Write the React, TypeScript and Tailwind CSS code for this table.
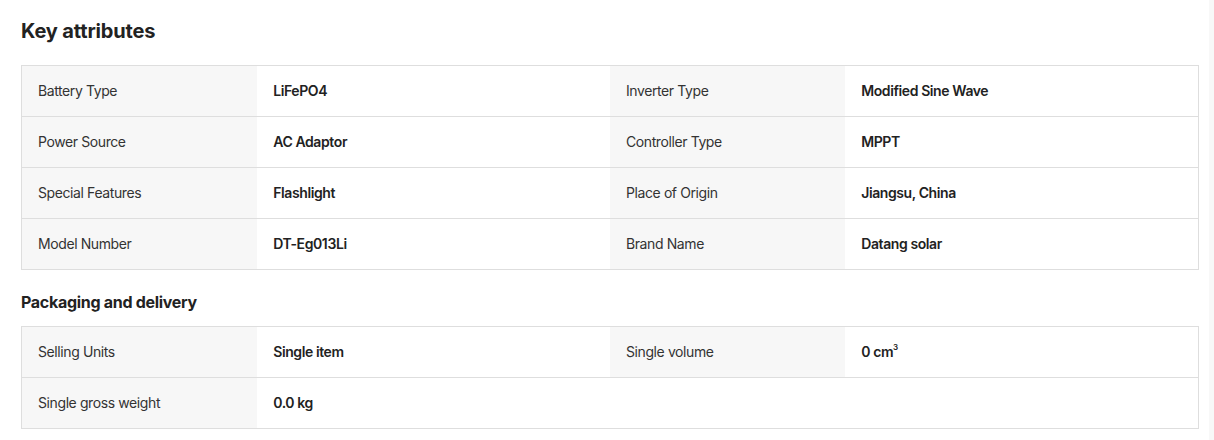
const keyAttributes: [string, string][] = [
  ['Battery Type', 'LiFePO4'],
  ['Inverter Type', 'Modified Sine Wave'],
  ['Power Source', 'AC Adaptor'],
  ['Controller Type', 'MPPT'],
  ['Special Features', 'Flashlight'],
  ['Place of Origin', 'Jiangsu, China'],
  ['Model Number', 'DT-Eg013Li'],
  ['Brand Name', 'Datang solar'],
];

const packaging: [string, React.ReactNode][] = [
  ['Selling Units', 'Single item'],
  ['Single volume', <>0 cm<sup className="text-[8px] -top-[5px]">3</sup></>],
  ['Single gross weight', '0.0 kg'],
];

function AttrTable({ items }: { items: [string, React.ReactNode][] }) {
  const rows: [string, React.ReactNode][][] = [];
  for (let i = 0; i < items.length; i += 2) rows.push(items.slice(i, i + 2));

  return (
    <div className="w-[1178px] border border-[#dedede]">
      {rows.map((row, ri) => (
        <div
          key={ri}
          className={`grid grid-cols-[20%_30%_20%_30%] box-content h-[50px] ${ri > 0 ? 'border-t border-[#dedede]' : ''}`}
        >
          {row.map(([label, value]) => (
            <div key={label} className="contents">
              <div className="bg-[#f7f7f7] flex items-center pl-4 text-sm tracking-[-0.4px] text-[#333]">{label}</div>
              <div className="flex items-center pl-4 text-sm tracking-[-0.4px] font-semibold text-[#222]">{value}</div>
            </div>
          ))}
        </div>
      ))}
    </div>
  );
}

export default function App() {
  return (
    <div className="flex min-h-[440px] bg-white font-['Inter',_sans-serif]">
      <div className="flex-1 pl-[21px] pt-[17px]">
        <h2 className="text-xl leading-7 font-bold tracking-[-0.15px] text-[#222] mb-5">Key attributes</h2>
        <AttrTable items={keyAttributes} />

        <h3 className="text-base leading-6 font-bold tracking-[-0.3px] text-[#222] mt-5 mb-3">Packaging and delivery</h3>
        <AttrTable items={packaging} />
      </div>
      <div className="w-[5px] bg-[#f8f8f8]" />
    </div>
  );
}
